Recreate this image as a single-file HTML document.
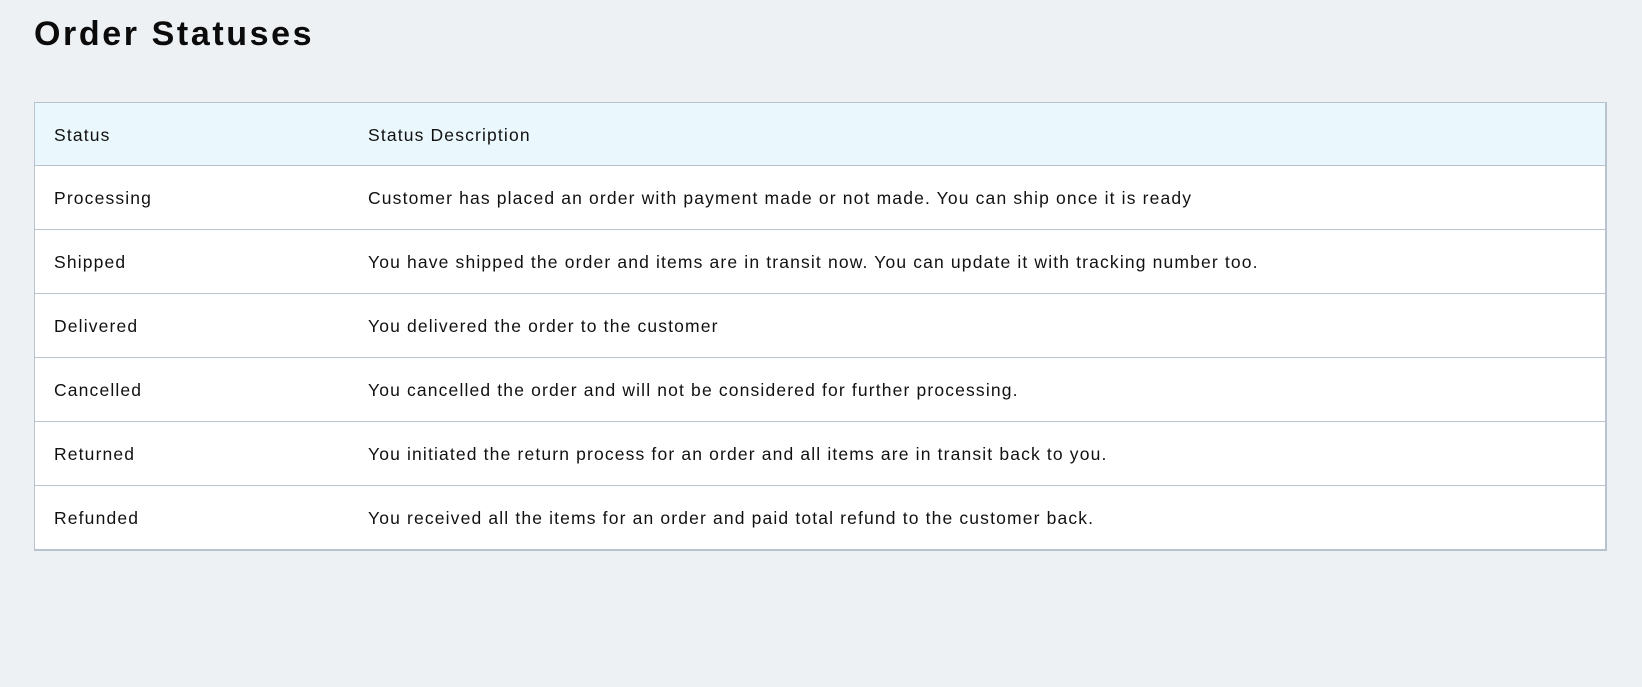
<!DOCTYPE html>
<html><head><style>
html,body{margin:0;padding:0;background:#edf1f4;width:1642px;height:687px;overflow:hidden;font-family:"Liberation Sans",sans-serif;color:#111;}
h1{position:absolute;left:34px;top:15px;margin:0;font-size:34px;font-weight:bold;letter-spacing:2.6px;color:#0b0b0b;}
table{position:absolute;left:34px;top:102px;width:1573px;border-collapse:collapse;background:#fff;border:1px solid #b9c3cd;border-right:2px solid #b9c3cd;border-bottom:2px solid #b9c3cd;}
td,th{height:61px;padding:0;padding-top:2px;border-bottom:1px solid #b9c3cd;font-size:17.5px;letter-spacing:1.15px;text-align:left;font-weight:normal;}
th{background:#eaf7fd;height:60px;}
td:first-child,th:first-child{padding-left:19px;width:314px;}
tr:last-child td{border-bottom:none;}
</style></head><body>
<h1>Order Statuses</h1>
<table>
<tr><th>Status</th><th>Status Description</th></tr>
<tr><td>Processing</td><td>Customer has placed an order with payment made or not made. You can ship once it is ready</td></tr>
<tr><td>Shipped</td><td>You have shipped the order and items are in transit now. You can update it with tracking number too.</td></tr>
<tr><td>Delivered</td><td>You delivered the order to the customer</td></tr>
<tr><td>Cancelled</td><td>You cancelled the order and will not be considered for further processing.</td></tr>
<tr><td>Returned</td><td>You initiated the return process for an order and all items are in transit back to you.</td></tr>
<tr><td>Refunded</td><td>You received all the items for an order and paid total refund to the customer back.</td></tr>
</table>
</body></html>
